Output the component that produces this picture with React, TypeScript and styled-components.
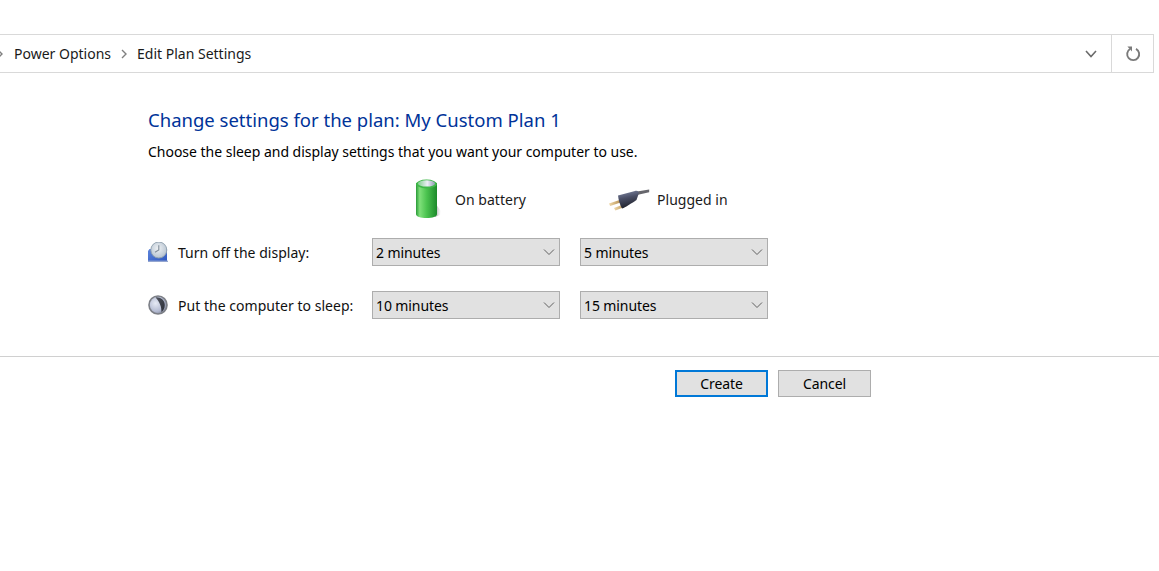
import React from 'react'
import styled, { createGlobalStyle } from 'styled-components'

const GlobalStyle = createGlobalStyle`
  html, body {
    margin: 0;
    padding: 0;
    background: #fff;
  }
  body {
    font-family: "Noto Sans", "Open Sans", sans-serif;
    font-size: 14px;
    color: #000;
    overflow: hidden;
  }
`

const Page = styled.div`
  width: 1159px;
  height: 571px;
  padding-top: 34px;
  box-sizing: border-box;
`

const AddressBar = styled.div`
  display: flex;
  align-items: stretch;
  width: 1154px;
  height: 39px;
  box-sizing: border-box;
  border: 1px solid #d9d9d9;
  border-left: none;
`

const Crumbs = styled.div`
  flex: 1;
  display: flex;
  align-items: center;
  color: #1a1a1a;
  font-size: 14px;
`

const CrumbText = styled.span`
  margin-right: 9px;
`

const CrumbArrow = styled.svg`
  width: 8px;
  height: 10px;
  margin-right: 9px;
  fill: none;
  stroke: #808080;
  stroke-width: 1.4;
`

const HistoryButton = styled.div`
  width: 38px;
  display: flex;
  align-items: center;
  justify-content: center;
  margin-right: 1px;
`

const RefreshButton = styled.div`
  width: 41px;
  border-left: 1px solid #d9d9d9;
  display: flex;
  align-items: center;
  justify-content: center;
`

const Content = styled.div`
  padding: 34px 0 0 148px;
`

const Title = styled.h1`
  margin: 0;
  font-size: 18.5px;
  line-height: 26px;
  font-weight: 400;
  color: #003399;
`

const Subtitle = styled.p`
  margin: 9px 0 0;
  font-size: 14px;
  line-height: 20px;
  letter-spacing: -0.02px;
  color: #000;
`

const SettingsGrid = styled.div`
  display: grid;
  grid-template-columns: 204px 188px 188px;
  column-gap: 20px;
  grid-auto-rows: 28px;
  row-gap: 25px;
`

const HeaderRow = styled.div`
  display: grid;
  grid-template-columns: 204px 188px 188px;
  column-gap: 20px;
  height: 59px;
  margin-top: 17px;
`

const PowerHeader = styled.div<{ $indent: number }>`
  display: flex;
  align-items: center;
  padding-left: ${p => p.$indent}px;
  letter-spacing: 0.03px;
  height: 40px;
  color: #1a1a1a;
`

const RowLabel = styled.div`
  display: flex;
  align-items: center;
  gap: 10px;
  letter-spacing: 0.03px;
  white-space: nowrap;
  color: #111;
`

const Select = styled.div`
  box-sizing: border-box;
  height: 28px;
  display: flex;
  align-items: center;
  justify-content: space-between;
  padding: 0 4px 0 3px;
  background: #e1e1e1;
  border: 1px solid #adadad;
  letter-spacing: -0.1px;
`

const Divider = styled.div`
  height: 1px;
  background: #d0d0d0;
  margin-top: 37px;
`

const Actions = styled.div`
  display: flex;
  gap: 10px;
  padding: 13px 0 0 675px;
`

const Button = styled.div<{ $primary?: boolean }>`
  box-sizing: border-box;
  width: 93px;
  height: 27px;
  display: flex;
  align-items: center;
  justify-content: center;
  background: #e1e1e1;
  border: ${p => (p.$primary ? '2px solid #0078d7' : '1px solid #adadad')};
  letter-spacing: -0.1px;
`

const Chevron = () => (
  <svg width="12" height="8" viewBox="0 0 12 8" fill="none" stroke="#606060" strokeWidth="1">
    <path d="M1 1.5 L6 6.5 L11 1.5" />
  </svg>
)

const BatteryIcon = () => (
  <svg width="26" height="40" viewBox="0 0 26 40" style={{ margin: '-1px 14px 0 0', flex: 'none' }}>
    <defs>
      <linearGradient id="batteryBody" x1="0" x2="1" y1="0" y2="0">
        <stop offset="0" stopColor="#2a9a38" />
        <stop offset="0.18" stopColor="#7fe07a" />
        <stop offset="0.5" stopColor="#4cc450" />
        <stop offset="1" stopColor="#1c8a2a" />
      </linearGradient>
      <linearGradient id="batteryTop" x1="0" x2="1" y1="0" y2="0">
        <stop offset="0" stopColor="#7fd08c" />
        <stop offset="0.55" stopColor="#eceef6" />
        <stop offset="1" stopColor="#8f9cb0" />
      </linearGradient>
      <linearGradient id="batteryShadow" x1="0" x2="1" y1="0" y2="0">
        <stop offset="0" stopColor="#7a7a7a" stopOpacity="0.75" />
        <stop offset="1" stopColor="#c0c0c0" stopOpacity="0" />
      </linearGradient>
    </defs>
    <path d="M20 24 L26 32 L25 36 L20 38 Z" fill="url(#batteryShadow)" />
    <path d="M1 4 V35 C1 37.6 5.5 39 11.5 39 C17.5 39 22 37.6 22 35 V4 Z" fill="url(#batteryBody)" />
    <ellipse cx="11.5" cy="5" rx="10.5" ry="4.4" fill="#3fb848" />
    <ellipse cx="11.5" cy="4.4" rx="8.6" ry="3.2" fill="url(#batteryTop)" />
  </svg>
)

const PlugIcon = () => (
  <svg width="42" height="22" viewBox="0 0 42 22" style={{ margin: '1px 7px 0 0', flex: 'none' }}>
    <defs>
      <linearGradient id="plugBody" x1="0.25" x2="0.5" y1="0" y2="1">
        <stop offset="0" stopColor="#7c84a0" />
        <stop offset="0.4" stopColor="#4a4f66" />
        <stop offset="1" stopColor="#1a1c24" />
      </linearGradient>
      <linearGradient id="plugPin" x1="0" x2="1" y1="0" y2="0">
        <stop offset="0" stopColor="#f0d9a8" />
        <stop offset="1" stopColor="#b08848" />
      </linearGradient>
    </defs>
    <path d="M29 2.4 L41.2 0.6 V3.2 L30 5.8 Z" fill="#66666c" />
    <path d="M1 14.6 L13 10.4 L14 13 L2.2 17 Z" fill="url(#plugPin)" />
    <path d="M6 19 L18 14.4 L19 17 L7.4 21.4 Z" fill="url(#plugPin)" />
    <path d="M10 6.5 L27 2 C30 1.4 31.2 3 30.6 5 L28.5 11 C24 14 18 18 14 19.6 C12 16 10.5 11 10 6.5 Z" fill="url(#plugBody)" />
  </svg>
)

const DisplayIcon = () => (
  <svg width="20" height="20" viewBox="0 0 20 20" style={{ flex: 'none' }}>
    <defs>
      <linearGradient id="displayScreen" x1="0" x2="1" y1="0" y2="1">
        <stop offset="0" stopColor="#5f86dc" />
        <stop offset="1" stopColor="#2f58c0" />
      </linearGradient>
      <radialGradient id="clockFace" cx="0.45" cy="0.4" r="0.7">
        <stop offset="0" stopColor="#eef1f4" />
        <stop offset="1" stopColor="#aebccb" />
      </radialGradient>
    </defs>
    <path d="M1.5 7 H19 V19 H0 V9 Z" fill="url(#displayScreen)" />
    <rect x="0" y="18.6" width="20" height="1.4" fill="#94a6d0" />
    <circle cx="10.8" cy="8" r="8" fill="url(#clockFace)" stroke="#8f9fad" strokeWidth="0.9" />
    <path d="M10.8 3.2 V8 L7 10.2" fill="none" stroke="#808c98" strokeWidth="1.1" />
  </svg>
)

const SleepIcon = () => (
  <svg width="20" height="20" viewBox="0 0 20 20" style={{ flex: 'none' }}>
    <defs>
      <radialGradient id="moonDisc" cx="0.35" cy="0.4" r="0.75">
        <stop offset="0" stopColor="#e6eaf4" />
        <stop offset="0.65" stopColor="#b4bbd2" />
        <stop offset="1" stopColor="#7d8398" />
      </radialGradient>
      <linearGradient id="moonShade" x1="0" x2="1" y1="0" y2="1">
        <stop offset="0" stopColor="#50545e" />
        <stop offset="1" stopColor="#2c2f38" />
      </linearGradient>
    </defs>
    <circle cx="10" cy="10" r="9.8" fill="#7c7f86" />
    <circle cx="10" cy="10" r="8.2" fill="url(#moonDisc)" />
    <path d="M7.5 2.4 C12 1.8 16.8 5 16.8 10 C16.8 13.5 15 16 13.4 17 C13.8 12 11.5 6.5 7.5 2.4 Z" fill="url(#moonShade)" />
  </svg>
)

const rows = [
  { label: 'Turn off the display:', icon: <DisplayIcon />, battery: '2 minutes', plugged: '5 minutes' },
  { label: 'Put the computer to sleep:', icon: <SleepIcon />, battery: '10 minutes', plugged: '15 minutes' },
]

const App = () => {
  return (
    <Page>
      <GlobalStyle />
      <AddressBar>
        <Crumbs>
          <CrumbArrow viewBox="0 0 8 10" style={{ marginLeft: -4, marginRight: 10 }}>
            <path d="M2 1 L6 5 L2 9" />
          </CrumbArrow>
          <CrumbText>Power Options</CrumbText>
          <CrumbArrow viewBox="0 0 8 10">
            <path d="M2 1 L6 5 L2 9" />
          </CrumbArrow>
          <CrumbText>Edit Plan Settings</CrumbText>
        </Crumbs>
        <HistoryButton>
          <svg width="12" height="8" viewBox="0 0 12 8" fill="none" stroke="#6b6b6b" strokeWidth="1.6">
            <path d="M1 1 L6 6.5 L11 1" />
          </svg>
        </HistoryButton>
        <RefreshButton>
          <svg width="16" height="16" viewBox="0 0 16 16" fill="none" stroke="#7a7a7a" strokeWidth="1.9">
            <path d="M5 3 A6 6 0 1 0 11 2.8" />
            <path d="M2.4 0.6 H7 V5.4 Z" fill="#7a7a7a" stroke="none" />
          </svg>
        </RefreshButton>
      </AddressBar>

      <Content>
        <Title>Change settings for the plan: My Custom Plan 1</Title>
        <Subtitle>Choose the sleep and display settings that you want your computer to use.</Subtitle>
        <HeaderRow>
          <div />
          <PowerHeader $indent={43}>
            <BatteryIcon />
            On battery
          </PowerHeader>
          <PowerHeader $indent={28}>
            <PlugIcon />
            Plugged in
          </PowerHeader>
        </HeaderRow>
        <SettingsGrid>
          {rows.map(row => (
            <React.Fragment key={row.label}>
              <RowLabel>
                {row.icon}
                {row.label}
              </RowLabel>
              <Select>
                {row.battery}
                <Chevron />
              </Select>
              <Select>
                {row.plugged}
                <Chevron />
              </Select>
            </React.Fragment>
          ))}
        </SettingsGrid>
      </Content>

      <Divider />
      <Actions>
        <Button $primary>Create</Button>
        <Button>Cancel</Button>
      </Actions>
    </Page>
  )
}

export default App
